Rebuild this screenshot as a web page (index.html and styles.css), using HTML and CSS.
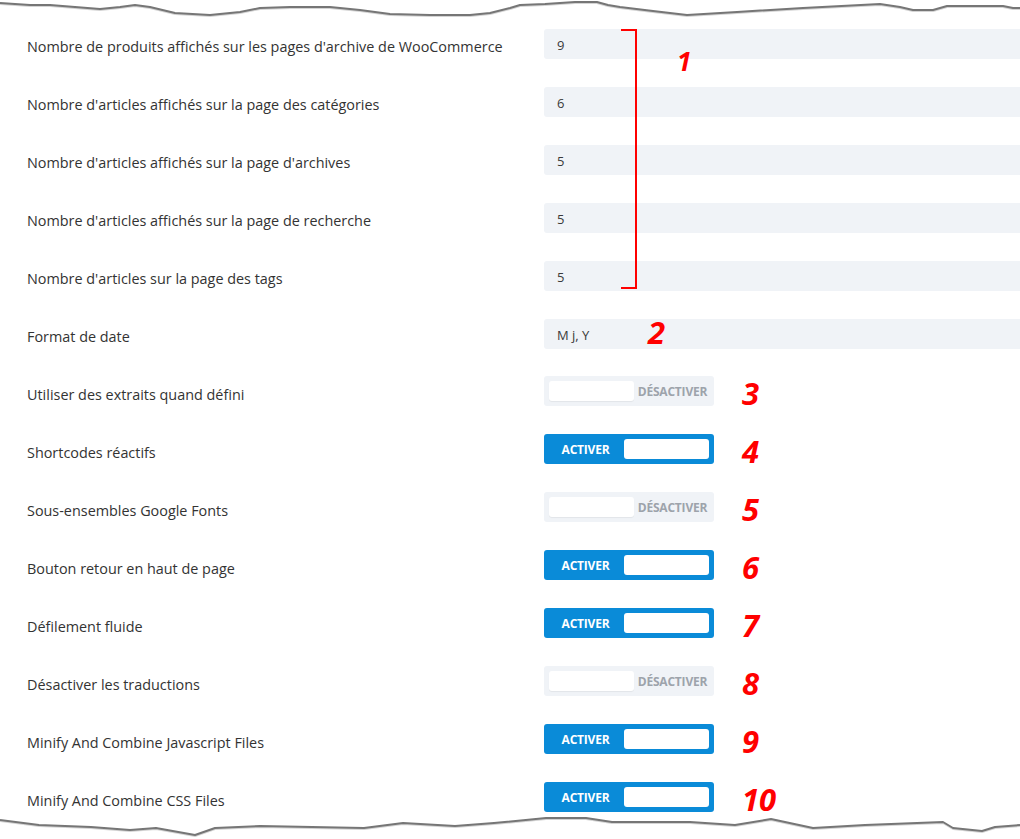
FILE: index.html
```html
<!DOCTYPE html>
<html lang="fr">
<head>
<meta charset="utf-8">
<title>Options</title>
<link rel="stylesheet" href="styles.css">
</head>
<body>
<div class="page">
  <svg class="edge edge-top" width="1020" height="24" viewBox="0 0 1020 24">
    <polyline class="edge-shadow" points="0,4 30,6 50,6 100,10 120,8 135,6 150,8 175,14 210,16 240,13 260,9 290,8 330,8 360,11 390,15 430,16 470,16 490,14 510,9 520,6 545,5 575,3 597,3 608,6 620,8 653,12 687,16 737,13 803,9 880,5 900,8 913,11 933,11 947,7 1003,7 1013,9 1020,9"/>
    <polyline class="edge-line" points="0,3 30,5 50,5 100,9 120,7 135,5 150,7 175,13 210,15 240,12 260,8 290,7 330,7 360,10 390,14 430,15 470,15 490,13 510,8 520,5 545,4 575,2 597,2 608,5 620,7 653,11 687,15 737,12 803,8 880,4 900,7 913,10 933,10 947,6 1003,6 1013,8 1020,8"/>
  </svg>

  <div class="settings">
    <div class="row">
      <div class="label">Nombre de produits affichés sur les pages d'archive de WooCommerce</div>
      <div class="control"><div class="field">9</div></div>
    </div>
    <div class="row">
      <div class="label">Nombre d'articles affichés sur la page des catégories</div>
      <div class="control"><div class="field">6</div></div>
    </div>
    <div class="row">
      <div class="label">Nombre d'articles affichés sur la page d'archives</div>
      <div class="control"><div class="field">5</div></div>
    </div>
    <div class="row">
      <div class="label">Nombre d'articles affichés sur la page de recherche</div>
      <div class="control"><div class="field">5</div></div>
    </div>
    <div class="row">
      <div class="label">Nombre d'articles sur la page des tags</div>
      <div class="control"><div class="field">5</div></div>
    </div>
    <div class="row">
      <div class="label">Format de date</div>
      <div class="control"><div class="field">M j, Y</div></div>
    </div>
    <div class="row">
      <div class="label">Utiliser des extraits quand défini</div>
      <div class="control">
        <div class="toggle off"><span class="knob"></span><span class="state">DÉSACTIVER</span></div>
        <span class="note">3</span>
      </div>
    </div>
    <div class="row">
      <div class="label">Shortcodes réactifs</div>
      <div class="control">
        <div class="toggle on"><span class="state">ACTIVER</span><span class="knob"></span></div>
        <span class="note">4</span>
      </div>
    </div>
    <div class="row">
      <div class="label">Sous-ensembles Google Fonts</div>
      <div class="control">
        <div class="toggle off"><span class="knob"></span><span class="state">DÉSACTIVER</span></div>
        <span class="note">5</span>
      </div>
    </div>
    <div class="row">
      <div class="label">Bouton retour en haut de page</div>
      <div class="control">
        <div class="toggle on"><span class="state">ACTIVER</span><span class="knob"></span></div>
        <span class="note">6</span>
      </div>
    </div>
    <div class="row">
      <div class="label">Défilement fluide</div>
      <div class="control">
        <div class="toggle on"><span class="state">ACTIVER</span><span class="knob"></span></div>
        <span class="note">7</span>
      </div>
    </div>
    <div class="row">
      <div class="label">Désactiver les traductions</div>
      <div class="control">
        <div class="toggle off"><span class="knob"></span><span class="state">DÉSACTIVER</span></div>
        <span class="note">8</span>
      </div>
    </div>
    <div class="row">
      <div class="label">Minify And Combine Javascript Files</div>
      <div class="control">
        <div class="toggle on"><span class="state">ACTIVER</span><span class="knob"></span></div>
        <span class="note">9</span>
      </div>
    </div>
    <div class="row">
      <div class="label">Minify And Combine CSS Files</div>
      <div class="control">
        <div class="toggle on"><span class="state">ACTIVER</span><span class="knob"></span></div>
        <span class="note">10</span>
      </div>
    </div>
  </div>

  <div class="bracket"></div>
  <span class="note note-1">1</span>
  <span class="note note-2">2</span>

  <svg class="edge edge-bottom" width="1020" height="24" viewBox="0 0 1020 24">
    <polyline class="edge-shadow" points="0,6 39,11 91,13 130,16 156,14 195,21 215,14 260,12 364,14 403,9 455,12 494,9 546,4 586,4 612,8 690,8 735,11 771,5 813,14 865,11 943,8 953,14 982,17 995,13 1020,11"/>
    <polyline class="edge-line" points="0,5 39,10 91,12 130,15 156,13 195,20 215,13 260,11 364,13 403,8 455,11 494,8 546,3 586,3 612,7 690,7 735,10 771,4 813,13 865,10 943,7 953,13 982,16 995,12 1020,10"/>
  </svg>
</div>
</body>
</html>
```

FILE: styles.css
```css
html, body {
  margin: 0;
  padding: 0;
  background: #ffffff;
}

body {
  font-family: "Open Sans", "Liberation Sans", sans-serif;
  color: #333333;
}

.page {
  position: relative;
  width: 1020px;
  height: 839px;
  overflow: hidden;
  padding-top: 15px;
  box-sizing: border-box;
}

.edge {
  position: absolute;
  left: 0;
  display: block;
}

.edge-top {
  top: 0;
}

.edge-bottom {
  top: 815px;
}

.edge-line {
  fill: none;
  stroke: #767676;
  stroke-width: 2;
  stroke-linejoin: round;
}

.edge-shadow {
  fill: none;
  stroke: #d4d4d4;
  stroke-width: 2;
  stroke-linejoin: round;
}

.settings {
  display: flex;
  flex-direction: column;
}

.row {
  display: grid;
  grid-template-columns: 544px 1fr;
  align-items: center;
  height: 58px;
}

.label {
  padding-left: 27px;
  padding-top: 4px;
  font-size: 14.4px;
  color: #333333;
  white-space: nowrap;
}

.control {
  display: flex;
  align-items: center;
  gap: 28px;
}

.field {
  box-sizing: border-box;
  width: 490px;
  height: 30px;
  background: #f0f3f7;
  border-radius: 3px;
  padding: 2px 0 0 13px;
  font-size: 13px;
  line-height: 28px;
  color: #3a3a3a;
}

.toggle {
  box-sizing: border-box;
  width: 170px;
  height: 30px;
  margin-top: -2px;
  border-radius: 3px;
  padding: 5px;
  display: flex;
  align-items: center;
}

.toggle.off {
  background: #f0f3f7;
}

.toggle.on {
  background: #0a8bd8;
}

.knob {
  width: 85px;
  height: 20px;
  background: #ffffff;
  border-radius: 3px;
  flex: none;
}

.toggle.off .knob {
  box-shadow: 0 1px 1px rgba(0, 0, 0, 0.06);
}

.state {
  flex: 1;
  text-align: center;
  font-size: 12px;
  font-weight: 700;
  letter-spacing: -0.2px;
}

.toggle.off .state {
  color: #9da3ab;
  padding-left: 2px;
}

.toggle.on .state {
  color: #ffffff;
  padding-right: 2px;
}

.note {
  font-family: "Open Sans", "Liberation Sans", sans-serif;
  font-style: italic;
  font-weight: 700;
  font-size: 31px;
  line-height: 1;
  color: #ff0000;
  padding-top: 3px;
}

.note-1 {
  position: absolute;
  left: 677px;
  top: 48px;
  font-size: 26px;
  padding-top: 0;
}

.note-2 {
  position: absolute;
  left: 648px;
  top: 317px;
  padding-top: 0;
}

.bracket {
  position: absolute;
  left: 621px;
  top: 29px;
  width: 14px;
  height: 256px;
  border: 2px solid #ff0000;
  border-left: none;
}
```
